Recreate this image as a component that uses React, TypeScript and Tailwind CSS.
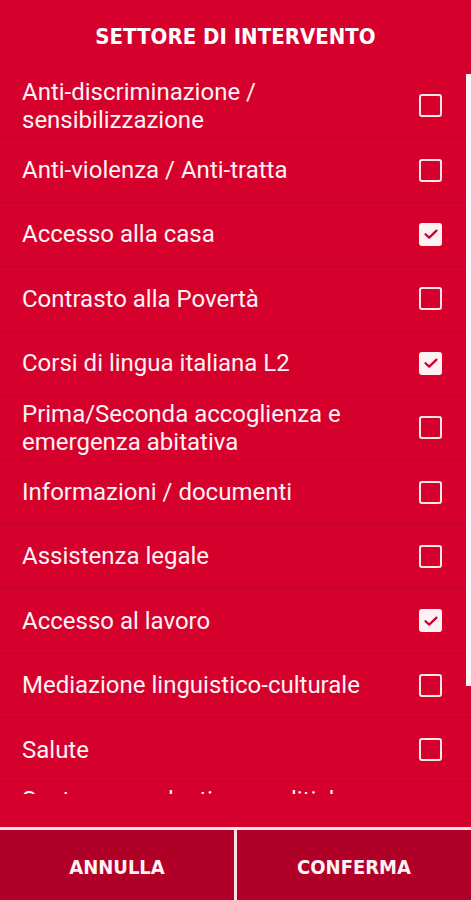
import React from "react";

interface Sector {
  label: string;
  checked: boolean;
}

const sectors: Sector[] = [
  { label: "Anti-discriminazione / sensibilizzazione", checked: false },
  { label: "Anti-violenza / Anti-tratta", checked: false },
  { label: "Accesso alla casa", checked: true },
  { label: "Contrasto alla Povertà", checked: false },
  { label: "Corsi di lingua italiana L2", checked: true },
  { label: "Prima/Seconda accoglienza e emergenza abitativa", checked: false },
  { label: "Informazioni / documenti", checked: false },
  { label: "Assistenza legale", checked: false },
  { label: "Accesso al lavoro", checked: true },
  { label: "Mediazione linguistico-culturale", checked: false },
  { label: "Salute", checked: false },
  { label: "Sostegno scolastico e politiche giovanili", checked: false },
];

const Checkbox: React.FC<{ checked: boolean }> = ({ checked }) =>
  checked ? (
    <div className="w-[23px] h-[23px] rounded-[3px] bg-[#fdf1f3] flex items-center justify-center">
      <svg width="16" height="16" viewBox="0 0 16 16" fill="none">
        <path d="M2.5 8.2 L6.2 11.6 L13.5 4.6" stroke="#c8002c" strokeWidth="2.2" strokeLinecap="round" strokeLinejoin="round" />
      </svg>
    </div>
  ) : (
    <div className="w-[23px] h-[23px] rounded-[3px] border-[2.5px] border-[#fbe6ea]" />
  );

export default function App() {
  return (
    <div className="w-[471px] h-[900px] bg-[#d5002c] flex flex-col overflow-hidden font-['Roboto',sans-serif]">
      {/* header */}
      <div className="h-[74px] flex items-center justify-center pb-[1px]">
        <h1 className="text-[22px] font-bold text-white font-['DejaVu_Sans_Condensed','DejaVu_Sans',sans-serif]">
          SETTORE DI INTERVENTO
        </h1>
      </div>

      {/* list */}
      <div className="relative h-[720px] overflow-hidden">
        {sectors.map((s, i) => (
          <div
            key={i}
            className="h-[64.4px] flex items-center justify-between pl-[22px] pr-[29px] border-b border-[#c6002a]"
          >
            <span className="text-[24px] leading-[28px] text-[#fdf2f4] max-w-[375px]">{s.label}</span>
            <Checkbox checked={s.checked} />
          </div>
        ))}
        {/* scrollbar */}
        <div className="absolute right-0 top-0 w-[5px] h-[612px] bg-[#fff4f6]" />
      </div>

      <div className="flex-1" />

      {/* buttons */}
      <div className="h-[73px] border-t-[3px] border-[#fbe3e8] flex bg-[#b10028]">
        <button className="flex-1 flex items-center justify-center pt-[4px] text-[20px] font-bold text-[#fdf2f4] font-['DejaVu_Sans_Condensed','DejaVu_Sans',sans-serif]">
          ANNULLA
        </button>
        <div className="w-[3px] bg-[#fbe3e8]" />
        <button className="flex-1 flex items-center justify-center pt-[4px] text-[20px] font-bold text-[#fdf2f4] font-['DejaVu_Sans_Condensed','DejaVu_Sans',sans-serif]">
          CONFERMA
        </button>
      </div>
    </div>
  );
}
